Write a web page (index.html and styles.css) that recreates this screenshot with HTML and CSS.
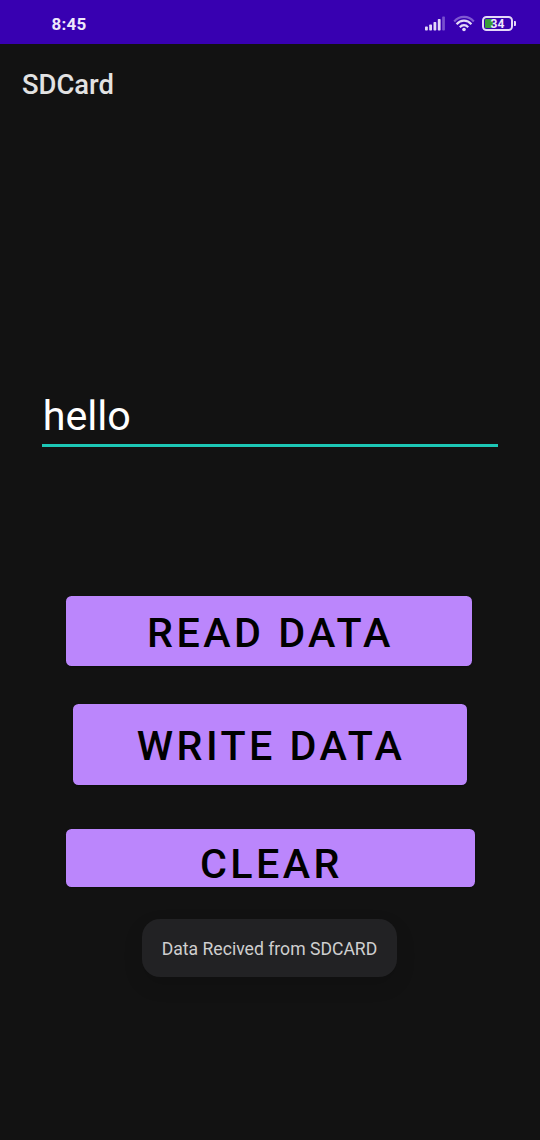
FILE: index.html
```html
<!DOCTYPE html>
<html lang="en">
<head>
<meta charset="utf-8">
<title>SDCard</title>
<link rel="stylesheet" href="styles.css">
</head>
<body>
<header class="status-bar">
  <span class="clock">8:45</span>
  <div class="status-icons">
    <svg class="signal" width="20" height="16" viewBox="0 0 20 16">
      <g fill="#e4d9f7">
        <rect x="0" y="11.6" width="2.8" height="3.8" rx="0.7"/>
        <rect x="4.2" y="9.6" width="2.8" height="5.8" rx="0.7"/>
        <rect x="8.5" y="7" width="2.8" height="8.4" rx="0.7"/>
        <rect x="12.8" y="4" width="2.8" height="11.4" rx="0.7"/>
      </g>
      <rect x="17.2" y="1.4" width="2.7" height="14" rx="0.7" fill="#7850cf"/>
    </svg>
    <svg class="wifi" width="22" height="17" viewBox="0 0 22 17" fill="none" stroke-width="2.2">
      <path d="M1.2 6.4C6.6 .4 15.4 .4 20.8 6.4" stroke="#8059d2"/>
      <path d="M3.6 9.2C7.8 4.5 14.2 4.5 18.4 9.2" stroke="#e4d9f7"/>
      <path d="M6.8 12.2C9.3 9.5 12.7 9.5 15.2 12.2" stroke="#e4d9f7"/>
      <circle cx="11" cy="14.5" r="1.8" fill="#e4d9f7"/>
    </svg>
    <div class="battery"><span class="battery-level"></span><span class="battery-text">34</span></div>
    <span class="battery-tip"></span>
  </div>
</header>
<h1 class="app-bar">SDCard</h1>
<main class="content">
  <div class="field">hello</div>
  <button class="btn btn-read">READ DATA</button>
  <button class="btn btn-write">WRITE DATA</button>
  <button class="btn btn-clear">CLEAR</button>
  <div class="toast">Data Recived from SDCARD</div>
</main>
</body>
</html>
```
FILE: styles.css
```css
* { box-sizing: border-box; }
body {
  margin: 0;
  height: 1140px;
  overflow: hidden;
  background: #121212;
  color: #fff;
  font-family: Roboto, sans-serif;
}
.status-bar {
  display: flex;
  justify-content: space-between;
  height: 44px;
  padding: 0 24px 0 51.5px;
  background: #3800b1;
}
.clock {
  font-size: 17px;
  font-weight: 700;
  line-height: 48px;
  letter-spacing: 0.2px;
  color: #efe8fb;
}
.status-icons { display: flex; align-items: flex-start; padding-top: 15px; }
.wifi { margin-left: 7.5px; }
.battery {
  position: relative;
  width: 31px;
  height: 15px;
  margin: 1px 0 0 7.5px;
  border: 2px solid #e4d9f7;
  border-radius: 4.5px;
}
.battery-level {
  position: absolute;
  left: 1px;
  top: 1px;
  width: 8px;
  height: 9px;
  border-radius: 1px;
  background: #399c38;
}
.battery-text {
  position: absolute;
  inset: 0;
  text-align: center;
  font-size: 12px;
  font-weight: 700;
  line-height: 12px;
  color: #efe8fb;
}
.battery-tip {
  width: 2px;
  height: 5px;
  margin: 6px 0 0 1px;
  border-radius: 0 1px 1px 0;
  background: #e4d9f7;
}
.app-bar {
  margin: 0;
  height: 80px;
  padding-left: 22px;
  font-size: 27.4px;
  font-weight: 500;
  line-height: 82px;
  color: #e2e2e2;
}
.content {
  display: flex;
  flex-direction: column;
  align-items: center;
  padding-top: 264px;
}
.field {
  width: 456px;
  height: 59px;
  padding-left: 0.7px;
  border-bottom: 3px solid #1cc7b5;
  font-size: 41.25px;
  line-height: 57px;
}
.btn {
  display: block;
  border: 0;
  border-radius: 5.5px;
  background: #bb86fc;
  box-shadow: 0 1px 2px rgba(0, 0, 0, 0.35);
  color: #000;
  font-family: inherit;
  font-size: 41.25px;
  font-weight: 500;
  line-height: 48px;
  letter-spacing: 3.45px;
  text-align: center;
}
.btn-read { width: 406px; height: 69.5px; margin: 149px 2px 0 0; padding: 4px 0 0 3px; }
.btn-write { width: 393.5px; height: 80.5px; margin-top: 38.5px; padding: 4px 0 0 2px; }
.btn-clear { width: 409px; height: 57.5px; margin-top: 44.5px; padding: 13px 0 0 3px; line-height: 45px; }
.toast {
  width: 255px;
  height: 58px;
  margin: 32.5px 1px 0 0;
  border-radius: 18px;
  background: #222224;
  box-shadow: 0 8px 20px rgba(0, 0, 0, 0.12);
  color: #cfcfcf;
  font-size: 17.6px;
  line-height: 60px;
  text-align: center;
  white-space: nowrap;
}
```
